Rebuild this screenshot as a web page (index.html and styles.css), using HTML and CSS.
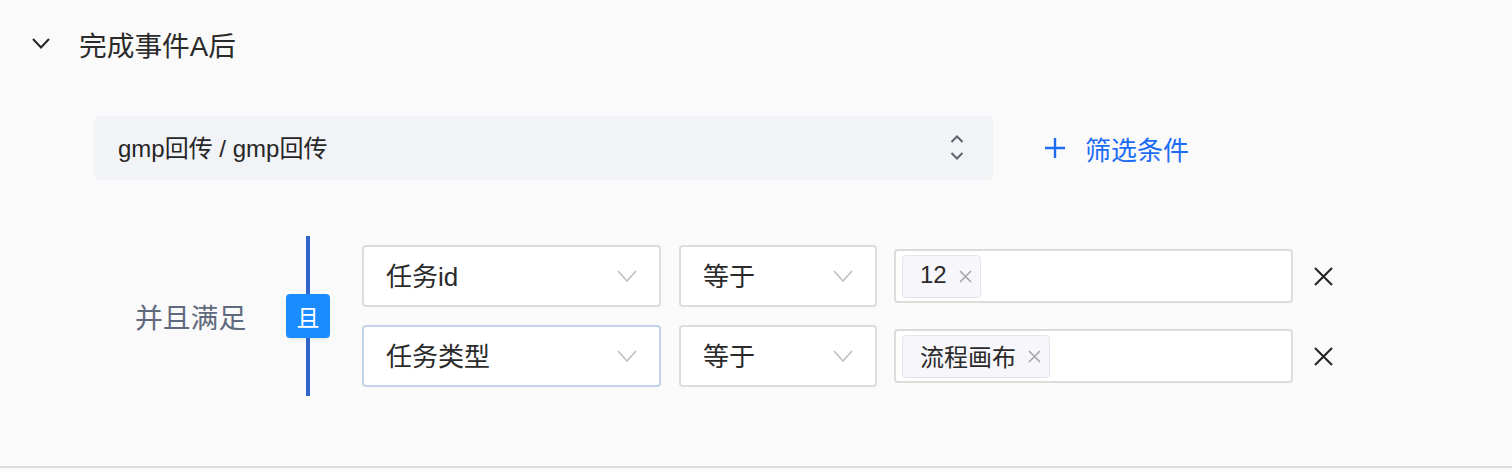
FILE: index.html
```html
<!DOCTYPE html>
<html lang="zh-CN">
<head>
<meta charset="utf-8">
<title>完成事件A后</title>
<link rel="stylesheet" href="styles.css">
</head>
<body>
<section class="panel">
  <div class="panel-header">
    <svg class="collapse-icon" width="20" height="14" viewBox="0 0 20 14"><polyline points="2,2 10,10.5 18,2" fill="none" stroke="#262626" stroke-width="2"/></svg>
    <span class="panel-title">完成事件A后</span>
  </div>

  <div class="event-row">
    <div class="event-select">
      <span class="event-value">gmp回传 / gmp回传</span>
      <svg class="updown" width="14" height="28" viewBox="0 0 14 28"><polyline points="1.5,8 7,2.5 12.5,8" fill="none" stroke="#5d636e" stroke-width="2"/><polyline points="1.5,19 7,24.5 12.5,19" fill="none" stroke="#5d636e" stroke-width="2"/></svg>
    </div>
    <a class="add-filter">
      <svg width="20" height="20" viewBox="0 0 20 20"><path d="M10 0V20M0 10H20" stroke="#1d6cf5" stroke-width="2.4"/></svg>
      <span>筛选条件</span>
    </a>
  </div>

  <div class="cond-group">
    <div class="cond-label">并且满足</div>
    <div class="relation">
      <div class="rel-line"></div>
      <div class="rel-badge">且</div>
      <div class="rel-line"></div>
    </div>
    <div class="cond-rows">
      <div class="cond-row">
        <div class="sel sel-field"><span class="sel-text">任务id</span><svg class="caret" width="20" height="12" viewBox="0 0 20 12"><polyline points="1,1 10,11 19,1" fill="none" stroke="#bcbcbc" stroke-width="1.5"/></svg></div>
        <div class="sel sel-op"><span class="sel-text">等于</span><svg class="caret" width="20" height="12" viewBox="0 0 20 12"><polyline points="1,1 10,11 19,1" fill="none" stroke="#bcbcbc" stroke-width="1.5"/></svg></div>
        <div class="tag-input"><span class="tag"><span class="tag-text">12</span><svg class="tag-x" width="13" height="13" viewBox="0 0 13 13"><path d="M1 1L12 12M12 1L1 12" stroke="#a3a3a3" stroke-width="1.5"/></svg></span></div>
        <svg class="remove" width="19" height="19" viewBox="0 0 19 19"><path d="M1 1L18 18M18 1L1 18" stroke="#222" stroke-width="2"/></svg>
      </div>
      <div class="cond-row">
        <div class="sel sel-field focused"><span class="sel-text">任务类型</span><svg class="caret" width="20" height="12" viewBox="0 0 20 12"><polyline points="1,1 10,11 19,1" fill="none" stroke="#bcbcbc" stroke-width="1.5"/></svg></div>
        <div class="sel sel-op"><span class="sel-text">等于</span><svg class="caret" width="20" height="12" viewBox="0 0 20 12"><polyline points="1,1 10,11 19,1" fill="none" stroke="#bcbcbc" stroke-width="1.5"/></svg></div>
        <div class="tag-input"><span class="tag"><span class="tag-text">流程画布</span><svg class="tag-x" width="13" height="13" viewBox="0 0 13 13"><path d="M1 1L12 12M12 1L1 12" stroke="#a3a3a3" stroke-width="1.5"/></svg></span></div>
        <svg class="remove" width="19" height="19" viewBox="0 0 19 19"><path d="M1 1L18 18M18 1L1 18" stroke="#222" stroke-width="2"/></svg>
      </div>
    </div>
  </div>
</section>
</body>
</html>
```

FILE: styles.css
```css
* { box-sizing: border-box; }
html, body {
  margin: 0;
  padding: 0;
  background: #fafafa;
  font-family: "Liberation Sans", "Noto Sans CJK SC", sans-serif;
  color: #262626;
}
.panel {
  height: 468px;
  border-bottom: 2px solid #dcdcdc;
}
.panel-header {
  height: 92px;
  display: flex;
  align-items: center;
  padding-left: 31px;
  padding-bottom: 4px;
}
.collapse-icon { display: block; }
.panel-title {
  margin-left: 28px;
  font-size: 27.7px;
  color: #2a2a2a;
}
.event-row {
  margin-top: 24px;
  margin-left: 94px;
  display: flex;
  align-items: center;
}
.event-select {
  width: 899px;
  height: 64px;
  background: #f2f3f7;
  border-radius: 5px;
  display: flex;
  align-items: center;
  justify-content: space-between;
  padding: 0 29px 0 24px;
}
.event-value {
  font-size: 24px;
  color: #262626;
  margin-bottom: 4px;
}
.updown { display: block; }
.add-filter {
  margin-left: 52px;
  display: flex;
  align-items: center;
  color: #1d6cf5;
  font-size: 26px;
}
.add-filter svg { display: block; margin-right: 20px; }
.cond-group {
  margin-top: 56px;
  margin-left: 135px;
  display: flex;
}
.cond-label {
  align-self: center;
  width: 151px;
  font-size: 27.8px;
  color: #5f6b7d;
}
.relation {
  width: 44px;
  display: flex;
  flex-direction: column;
  align-items: center;
}
.rel-line {
  flex: 1;
  width: 4px;
  background: #3064c9;
}
.rel-badge {
  width: 44px;
  height: 44px;
  background: #1a8cff;
  border-radius: 4px;
  color: #fff;
  font-size: 23px;
  display: flex;
  align-items: center;
  justify-content: center;
  box-shadow: 0 2px 2px rgba(0,0,0,0.06);
}
.cond-rows {
  margin-left: 32px;
  padding: 9px 0;
  display: flex;
  flex-direction: column;
  gap: 18px;
}
.cond-row {
  display: flex;
  align-items: center;
}
.sel {
  height: 62px;
  background: #fff;
  border: 2px solid #dcdcdc;
  border-radius: 4px;
  display: flex;
  align-items: center;
  justify-content: space-between;
  padding: 0 22px 0 22px;
  font-size: 26px;
  color: #2a2a2a;
}
.sel-text { margin-bottom: 3px; }
.sel.focused { border-color: #c3d3e8; }
.sel-field { width: 299px; }
.sel-op { width: 198px; margin-left: 18px; }
.caret { display: block; }
.tag-input {
  width: 399px;
  height: 54px;
  margin-left: 17px;
  background: #fff;
  border: 2px solid #dcdcdc;
  border-radius: 4px;
  display: flex;
  align-items: center;
  padding-left: 6px;
}
.tag {
  height: 43px;
  display: inline-flex;
  align-items: center;
  padding: 0 8px 0 17px;
  background: #f6f6fb;
  border: 1px solid #e4e4ee;
  border-radius: 4px;
  font-size: 24px;
  color: #2a2a2a;
}
.tag-text { margin-bottom: 2px; }
.tag-x { display: block; margin-left: 12px; }
.remove { display: block; margin-left: 21px; }
```
